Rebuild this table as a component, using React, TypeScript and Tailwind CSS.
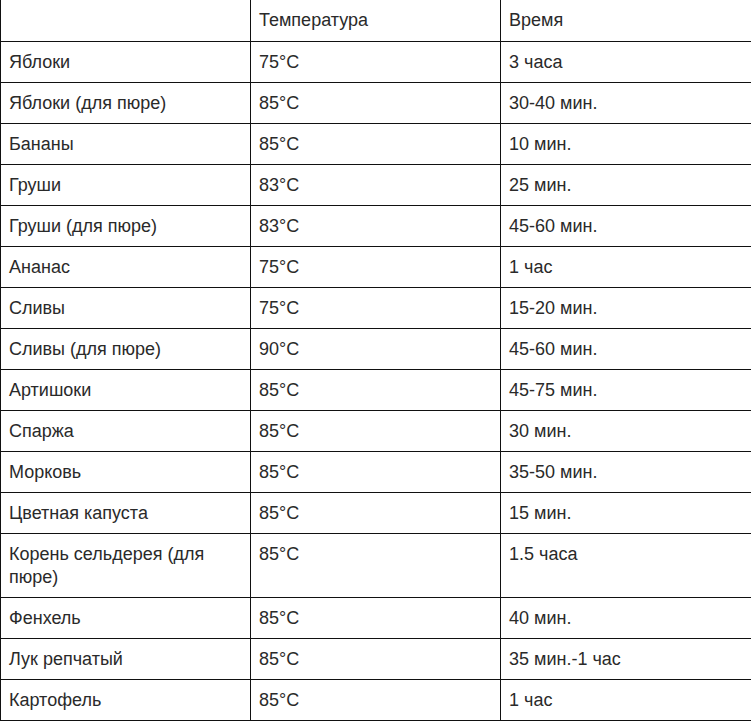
const rows: [string, string, string][] = [
  ["Яблоки", "75°C", "3 часа"],
  ["Яблоки (для пюре)", "85°C", "30-40 мин."],
  ["Бананы", "85°C", "10 мин."],
  ["Груши", "83°C", "25 мин."],
  ["Груши (для пюре)", "83°C", "45-60 мин."],
  ["Ананас", "75°C", "1 час"],
  ["Сливы", "75°C", "15-20 мин."],
  ["Сливы (для пюре)", "90°C", "45-60 мин."],
  ["Артишоки", "85°C", "45-75 мин."],
  ["Спаржа", "85°C", "30 мин."],
  ["Морковь", "85°C", "35-50 мин."],
  ["Цветная капуста", "85°C", "15 мин."],
  ["Корень сельдерея (для пюре)", "85°C", "1.5 часа"],
  ["Фенхель", "85°C", "40 мин."],
  ["Лук репчатый", "85°C", "35 мин.-1 час"],
  ["Картофель", "85°C", "1 час"],
];

const cell = "border border-[#111] align-top px-[8px] pt-[9px] pb-[8px] leading-[23px]";
const head = "border border-t-0 border-[#111] align-top px-[8px] pt-[9px] pb-[9px] leading-[23px] font-normal text-left";

export default function App() {
  return (
    <div className="w-[751px] h-[721px] bg-white overflow-hidden" style={{ fontFamily: '"Liberation Sans", Arial, sans-serif' }}>
      <table className="w-[751px] border-collapse table-fixed text-[18px] text-[#2a2a2a]">
        <colgroup>
          <col className="w-[250px]" />
          <col className="w-[250px]" />
          <col className="w-[251px]" />
        </colgroup>
        <thead>
          <tr>
            <th className={head}></th>
            <th className={head}>Температура</th>
            <th className={head}>Время</th>
          </tr>
        </thead>
        <tbody>
          {rows.map(([name, temp, time]) => (
            <tr key={name}>
              <td className={cell}>{name}</td>
              <td className={cell}>{temp}</td>
              <td className={cell}>{time}</td>
            </tr>
          ))}
        </tbody>
      </table>
    </div>
  );
}
